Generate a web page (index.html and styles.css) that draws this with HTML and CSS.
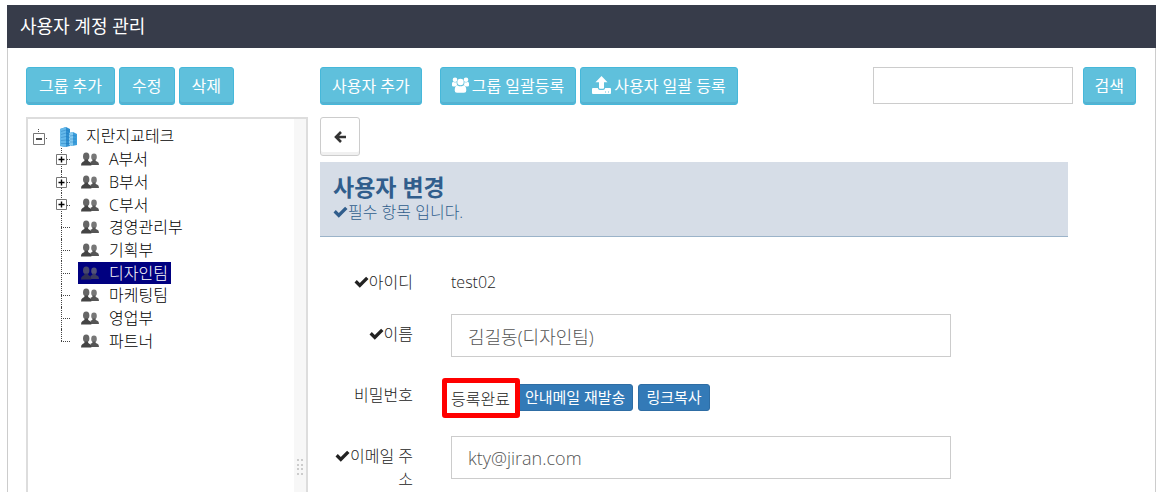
FILE: index.html
```html
<!DOCTYPE html>
<html lang="ko">
<head>
    <meta charset="UTF-8">
    <meta name="viewport" content="width=device-width, initial-scale=1.0">
    <title>사용자 계정 관리</title>
    <link rel="stylesheet" href="styles.css">
</head>
<body>

    <!-- Shared icons -->
    <svg class="defs" aria-hidden="true">
        <symbol id="check" viewBox="0 0 14 12"><path d="M0 6.4 2.3 4.1 5.3 7.1 11.6 0.8 14 3.1 5.3 11.8z"/></symbol>
        <symbol id="people" viewBox="0 0 18 14">
            <ellipse cx="13" cy="5" rx="2.8" ry="3.4" fill="#777"/>
            <path d="M9.5 13V9.800Q12 9.200 11.600 7.400h2.800Q14.200 9 16.400 9.700 18 10.200 18 13z" fill="#555"/>
            <ellipse cx="5.2" cy="4.4" rx="3.2" ry="3.8" fill="#666"/>
            <path d="M0 13.400Q0 10.400 1.600 9.900 4 9.200 3.600 7.400h3.400Q6.600 9.200 8.800 9.900 10.400 10.400 10.400 13.400z" fill="#444"/>
        </symbol>
        <symbol id="plus" viewBox="0 0 11 11"><path d="M.5.5h10v10H.5z" fill="#fff" stroke="#777"/><path d="M2.500 5.500h6M5.500 2.500v6" stroke="#000" stroke-width="1.4"/></symbol>
        <symbol id="minus" viewBox="0 0 14 16"><path d="M.5 4.500h11v11H.5z" fill="#fff" stroke="#777"/><path d="M3 10h6" stroke="#000" stroke-width="1.4"/><path d="M5.500 0v1M5.500 2v1M13 9.500h1" stroke="#555"/></symbol>
    </svg>

    <header class="page-header">
        <h1>사용자 계정 관리</h1>
    </header>

    <div class="panel">
        <aside class="sidebar">
            <div class="toolbar">
                <button type="button" class="btn btn-info">그룹 추가</button>
                <button type="button" class="btn btn-info">수정</button>
                <button type="button" class="btn btn-info">삭제</button>
            </div>
            <div class="tree-box">
                <div class="tree">
                    <div class="root">
                        <svg class="toggle" width="14" height="16"><use href="#minus"/></svg>
                        <svg class="building" width="18" height="20" viewBox="0 0 18 20">
                            <path d="M1 2 7 0l4 2v17l-4 1-6-1z" fill="#2f8fd0"/>
                            <path d="M1 2 7 0v20l-6-1z" fill="#65b9ea"/>
                            <path d="m10 6 4-1 4 2v11l-5 1-3-1z" fill="#3c9edb"/>
                            <path d="m10 6 4-1v14l-4-1z" fill="#85caf0"/>
                            <path d="M2 4.500 7 3l4 1.500M2 7.500 7 6l4 1.500M2 10.500 7 9.500l4 1M2 13.500 7 13l4 .5M2 16.500h9M11 9l3-.5 3 .5M11 12h6M11 15h6" fill="none" stroke="#1c75b8" stroke-width=".4"/>
                        </svg>
                        <a href="#">지란지교테크</a>
                    </div>
                    <ul class="departments">
                        <li class="parent"><svg class="toggle" width="11" height="11"><use href="#plus"/></svg><a href="#"><svg width="18" height="14"><use href="#people"/></svg>A부서</a></li>
                        <li class="parent"><svg class="toggle" width="11" height="11"><use href="#plus"/></svg><a href="#"><svg width="18" height="14"><use href="#people"/></svg>B부서</a></li>
                        <li class="parent"><svg class="toggle" width="11" height="11"><use href="#plus"/></svg><a href="#"><svg width="18" height="14"><use href="#people"/></svg>C부서</a></li>
                        <li><a href="#"><svg width="18" height="14"><use href="#people"/></svg>경영관리부</a></li>
                        <li><a href="#"><svg width="18" height="14"><use href="#people"/></svg>기획부</a></li>
                        <li><a href="#" class="selected"><svg width="18" height="14"><use href="#people"/></svg>디자인팀</a></li>
                        <li><a href="#"><svg width="18" height="14"><use href="#people"/></svg>마케팅팀</a></li>
                        <li><a href="#"><svg width="18" height="14"><use href="#people"/></svg>영업부</a></li>
                        <li><a href="#"><svg width="18" height="14"><use href="#people"/></svg>파트너</a></li>
                    </ul>
                </div>
                <div class="splitter">
                    <svg width="6" height="16" fill="#ccc"><path d="M0 0h2v2H0zM4 0h2v2H4zM0 5h2v2H0zM4 5h2v2H4zM0 9h2v2H0zM4 9h2v2H4zM0 14h2v2H0zM4 14h2v2H4z"/></svg>
                </div>
            </div>
        </aside>

        <main class="content">
            <div class="toolbar">
                <button type="button" class="btn btn-info add-user">사용자 추가</button>
                <button type="button" class="btn btn-info">
                    <svg width="17" height="16" viewBox="0 0 17 16" fill="#fff">
                        <circle cx="3" cy="2.800" r="2.300"/><circle cx="14" cy="2.800" r="2.300"/>
                        <path d="M0 8.500V6.500Q0 4.500 1.500 5q1.500.8 3 0Q4.500 7 5.500 8.500q-1.500 0-2.300 1H1.500Q0 9.500 0 8.500zM17 8.500V6.500Q17 4.500 15.500 5q-1.500.8-3 0 0 2-1 3.500 1.500 0 2.300 1h1.700Q17 9.500 17 8.500z"/>
                        <circle cx="8.500" cy="5" r="3.200"/>
                        <path d="M2.700 13.500Q2.700 8.500 5.600 8.500q2.900 1.700 5.800 0 2.900 0 2.900 5 0 2.300-2.300 2.300H5Q2.700 15.800 2.700 13.500z"/>
                    </svg>
                    그룹 일괄등록
                </button>
                <button type="button" class="btn btn-info">
                    <svg width="19" height="18" viewBox="0 0 19 18" fill="#fff">
                        <path d="M9.500 0 15.500 6.200H12v5.500q0 1-1 1H8q-1 0-1-1V6.200H3.500z"/>
                        <path fill-rule="evenodd" d="M1 12h4.800q.5 2 2 2h3.400q1.500 0 2-2H18q1 0 1 1v4q0 1-1 1H1q-1 0-1-1v-4q0-1 1-1zM13 15.500v1h1v-1zM16 15.500v1h1v-1z"/>
                    </svg>
                    사용자 일괄 등록
                </button>
                <form class="search">
                    <input type="text" aria-label="검색어">
                    <button type="button" class="btn btn-info">검색</button>
                </form>
            </div>

            <button type="button" class="btn btn-back" aria-label="뒤로">
                <svg width="12" height="12" viewBox="0 0 12 12"><path d="M7 1 2 6l5 5M2 6h10" fill="none" stroke="#333" stroke-width="2.600"/></svg>
            </button>

            <div class="title-box">
                <h2>사용자 변경</h2>
                <p><svg class="check" width="15" height="12"><use href="#check"/></svg>필수 항목 입니다.</p>
            </div>

            <form class="user-form">
                <div class="form-row">
                    <span class="label"><svg class="check" width="15" height="12"><use href="#check"/></svg>아이디</span>
                    <span class="value">test02</span>
                </div>
                <div class="form-row">
                    <label class="label" for="name"><svg class="check" width="15" height="12"><use href="#check"/></svg>이름</label>
                    <input type="text" id="name" value="김길동(디자인팀)">
                </div>
                <div class="form-row">
                    <span class="label">비밀번호</span>
                    <div class="password">
                        <span class="status">등록완료</span>
                        <button type="button" class="btn-primary">안내메일 재발송</button>
                        <button type="button" class="btn-primary">링크복사</button>
                    </div>
                </div>
                <div class="form-row">
                    <label class="label" for="email"><svg class="check" width="15" height="12"><use href="#check"/></svg>이메일 주소</label>
                    <input type="text" id="email" value="kty@jiran.com">
                </div>
            </form>
        </main>
    </div>

</body>
</html>
```
FILE: styles.css
```css
* { box-sizing: border-box; }
body {
    margin: 0;
    padding: 5px 6px 0 7px;
    height: 100vh;
    overflow: hidden;
    display: flex;
    flex-direction: column;
    background-color: #fff;
    color: #222;
    font-family: "Open Sans", "Noto Sans CJK KR", sans-serif;
    font-size: 16px;
    font-weight: 300;
    line-height: 23px;
}
h1, h2, p, ul { margin: 0; padding: 0; }
a { color: #000; text-decoration: none; }
button, input { font-family: inherit; font-weight: inherit; }
.defs { display: none; }

.page-header { background-color: #373c4a; padding: 10px 13px; }
.page-header h1 { color: #fff; font-size: 18px; font-weight: 400; }

.panel {
    flex: 1;
    min-height: 0;
    display: flex;
    gap: 12px;
    padding: 19px 19px 0 18px;
    border: 1px solid #ccc;
    border-width: 0 1px;
}

/* Buttons */
.toolbar { display: flex; gap: 4px; margin-bottom: 12px; }
.btn {
    display: flex;
    align-items: center;
    gap: 3px;
    height: 38px;
    padding: 0 12px 2px;
    border: 1px solid #46b8da;
    border-radius: 3px;
    font-size: 16px;
    white-space: nowrap;
    cursor: pointer;
}
.btn-info { background-color: #5fc0dc; color: #fff; font-weight: 400; box-shadow: inset 0 -2px 0 #55b2d1; }
.btn-back { background-color: #fff; border-color: #ccc; height: 39px; padding: 0 13px; box-shadow: inset 0 -3px 0 #f0f0f0; }
.btn-primary {
    height: 27px;
    padding: 0 7px;
    border: 1px solid #2e6da4;
    border-radius: 3px;
    background-color: #337ab7;
    color: #fff;
    font-size: 15px;
    font-weight: 400;
    line-height: 23px;
}

/* Group tree */
.sidebar { width: 282px; flex: none; display: flex; flex-direction: column; }
.tree-box { flex: 1; min-height: 0; display: flex; border: 2px solid #ddd; border-bottom: 0; }
.tree { flex: 1; padding: 6px 0 0 5px; }
.splitter { width: 12px; padding-bottom: 17px; background-color: #f7f7f7; display: flex; align-items: flex-end; justify-content: center; }
.root { display: flex; align-items: center; height: 23px; }
.building { margin: 0 9px 0 12px; }
.departments { list-style: none; height: 204px; display: grid; grid-auto-rows: 1fr; margin-left: 28px; }
.departments li {
    position: relative;
    display: flex;
    align-items: center;
    padding-left: 17px;
}
/* dotted connector lines */
.departments li::before {
    content: "";
    position: absolute;
    left: 0;
    top: 0;
    height: 100%;
    border-left: 1px dotted #444;
}
.departments li:last-child::before { height: 50%; }
.departments li::after {
    content: "";
    position: absolute;
    left: 0;
    top: 50%;
    width: 9px;
    border-top: 1px dotted #444;
}
.departments .toggle { position: absolute; left: -5px; top: 6px; z-index: 1; }
.departments a { display: flex; align-items: center; gap: 10px; padding: 0 3px; line-height: 22px; }
.departments .selected { background-color: #000080; color: #fff; }
.selected svg { opacity: 0.7; }

/* Content */
.content { flex: 1; min-width: 0; }
.content .btn-info { padding: 0 11px 2px; }
.add-user { margin-right: 14px; }
.search { display: flex; gap: 10px; margin-left: auto; }
.search input { width: 200px; height: 37px; border: 1px solid #ccc; padding: 0 10px; font-size: 16px; }
.title-box {
    width: calc(100% * 11 / 12);
    height: 75px;
    margin: 6px 0 25px;
    padding: 11px 13px;
    background-color: #d6dde7;
    border-bottom: 1px solid #9bb3c9;
    color: #305d8c;
}
.title-box h2 { font-size: 23px; font-weight: 700; line-height: 28px; }
.check { fill: currentColor; }
.form-row { display: grid; grid-template-columns: 93px minmax(0, 500px); column-gap: 38px; min-height: 34px; margin-bottom: 18px; }
.label { padding: 9px 0 0 8px; text-align: right; }
.value { padding-top: 9px; }
.form-row input { height: 43px; padding: 0 16px; border: 1px solid #ccc; color: #555; font-size: 18px; }
.password { display: flex; align-items: center; gap: 5px; height: 43px; padding-top: 2px; }
.status { position: relative; margin-right: 2px; padding-top: 3px; }
/* highlight frame around the status */
.status::after {
    content: "";
    position: absolute;
    inset: -7px -10px -7px -9px;
    border: 5px solid #f00;
    border-radius: 3px;
}
```
